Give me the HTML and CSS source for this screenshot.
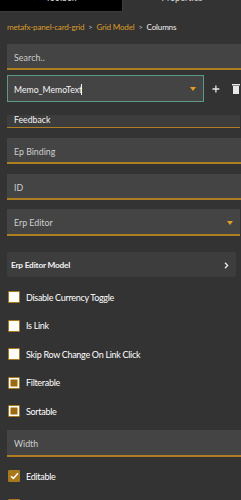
FILE: index.html
```html
<!DOCTYPE html>
<html>
<head>
<meta charset="utf-8">
<link rel="stylesheet" href="styles.css">
</head>
<body>
<div class="tabs">
  <div class="tab tab-active">Toolbox</div>
  <div class="tab">Properties</div>
</div>
<div class="panel">
  <div class="crumbs"><span class="crumb">metafx-panel-card-grid</span><span class="sep">&gt;</span><span class="crumb">Grid Model</span><span class="sep">&gt;</span><span class="crumb-cur">Columns</span></div>
  <div class="field search">Search..</div>
  <div class="memo-row">
    <div class="memo"><span class="memo-text">Memo_MemoText</span><span class="caret"></span><span class="grow"></span><span class="tri"></span></div>
    <svg class="plus" width="8" height="8" viewBox="0 0 8 8"><path d="M4 0.5V7.5M0.5 4H7.5" stroke="#e8e8e8" stroke-width="1.3"/></svg>
    <svg class="trash" width="8" height="11" viewBox="0 0 8 11"><rect x="0" y="1" width="8" height="1.5" fill="#e8e8e8"/><rect x="1" y="3" width="6" height="8" fill="#e8e8e8"/></svg>
  </div>
  <div class="feedback">Feedback</div>
  <div class="field gap-a">Ep Binding</div>
  <div class="field gap-a">ID</div>
  <div class="field select gap-b"><span>Erp Editor</span><span class="tri"></span></div>
  <div class="model"><span>Erp Editor Model</span><svg width="5" height="7" viewBox="0 0 5 7"><path d="M1 0.8L3.6 3.5L1 6.2" stroke="#dfe8ef" stroke-width="1.4" fill="none"/></svg></div>
  <div class="checks">
    <div class="check"><span class="box"></span>Disable Currency Toggle</div>
    <div class="check"><span class="box"></span>Is Link</div>
    <div class="check"><span class="box"></span>Skip Row Change On Link Click</div>
    <div class="check"><span class="box part"></span>Filterable</div>
    <div class="check"><span class="box part"></span>Sortable</div>
  </div>
  <div class="field width">Width</div>
  <div class="checks">
    <div class="check"><span class="box on"><svg width="9" height="8" viewBox="0 0 9 8"><path d="M1 4.2L3.4 6.4L8 1.2" stroke="#fff" stroke-width="1.5" fill="none"/></svg></span>Editable</div>
    <div class="check"><span class="box"></span>Selectable</div>
  </div>
</div>
</body>
</html>
```

FILE: styles.css
```css
html, body {
  margin: 0;
  padding: 0;
}
body {
  background: #333333;
  font-family: Lato, "Open Sans", sans-serif;
  width: 241px;
  height: 500px;
  overflow: hidden;
  color: #fff;
}
.tabs {
  display: flex;
  height: 20px;
  margin-top: -8px;
  font-size: 9px;
}
.tab {
  flex: 0 0 118px;
  text-align: center;
  line-height: 12px;
  color: #d8d8d8;
  background: #333;
}
.tab-active {
  flex: 0 0 123px;
  background: #000;
  border-right: 1px solid #3c3c3c;
  border-bottom: 1px solid #3c3c3c;
  box-sizing: border-box;
}
.panel {
  padding-left: 7px;
  width: 240px;
  box-sizing: border-box;
}
.crumbs {
  height: 22px;
  line-height: 30px;
  font-size: 8.1px;
  display: flex;
  align-items: baseline;
  white-space: nowrap;
  letter-spacing: -0.2px;
}
.crumb {
  color: #d99a2b;
}
.crumb-cur {
  color: #f0f0f0;
}
.sep {
  color: #bfbfbf;
  margin: 0 4px;
  font-size: 7.5px;
}
.field {
  box-sizing: border-box;
  height: 26px;
  background: #444444;
  border-bottom: 2px solid #b07e22;
  padding-left: 7px;
  font-size: 8.8px;
  color: #cfcfcf;
  display: flex;
  align-items: center;
  padding-top: 2px;
  width: 235px;
}
.search {
  margin-top: 10px;
  width: 240px;
  letter-spacing: 0.1px;
}
.memo-row {
  display: flex;
  align-items: center;
  margin-top: 5px;
  height: 27px;
}
.memo {
  box-sizing: border-box;
  width: 202px;
  height: 27px;
  border: 1px solid #5b9a84;
  background: #444444;
  display: flex;
  align-items: center;
  padding: 1px 7px 0 6px;
  font-size: 8.7px;
  color: #f4f4f4;
}
.caret {
  width: 1px;
  height: 11px;
  background: #f0f0f0;
  margin-left: -1px;
}
.grow {
  flex: 1;
}
.tri {
  width: 0;
  height: 0;
  border-left: 3.5px solid transparent;
  border-right: 3.5px solid transparent;
  border-top: 4px solid #e6a020;
}
.plus {
  margin-left: 8px;
}
.trash {
  margin-left: 12px;
  flex: none;
}
.feedback {
  box-sizing: border-box;
  margin-top: 13px;
  height: 13px;
  width: 233px;
  background: #3d3d3d;
  border-bottom: 1px solid #b07e22;
  font-size: 8.7px;
  line-height: 9px;
  padding-left: 7px;
  color: #f4f4f4;
}
.gap-a {
  margin-top: 10px;
  width: 240px;
}
.select {
  justify-content: space-between;
  padding-right: 7px;
  height: 27px;
  width: 233px;
}
.gap-b {
  margin-top: 9px;
}
.model {
  margin-top: 16px;
  box-sizing: border-box;
  height: 25px;
  width: 229px;
  background: #3d3d3d;
  border-radius: 2px;
  display: flex;
  align-items: center;
  justify-content: space-between;
  padding: 1px 7px 0 4px;
  font-size: 8.3px;
  font-weight: bold;
  letter-spacing: -0.2px;
  color: #f4f4f4;
}
.checks {
  margin-top: 5.75px;
  display: flex;
  flex-direction: column;
}
.check {
  height: 28.5px;
  display: flex;
  align-items: center;
  font-size: 9px;
  letter-spacing: -0.3px;
  color: #ffffff;
  white-space: nowrap;
}
.box {
  box-sizing: border-box;
  width: 12px;
  height: 12px;
  margin: 0 6px 0 1px;
  background: #ffffff;
  border: 1.5px solid #a8781c;
  border-radius: 1px;
  display: flex;
  align-items: center;
  justify-content: center;
  flex: none;
}
.box.part {
  background: #9a6a12;
  box-shadow: inset 0 0 0 1.5px #ffffff;
}
.box.on {
  background: #a8781c;
}
.width {
  margin-top: 4.75px;
  height: 27px;
  width: 240px;
}
.width + .checks {
  margin-top: 4.75px;
}
```
